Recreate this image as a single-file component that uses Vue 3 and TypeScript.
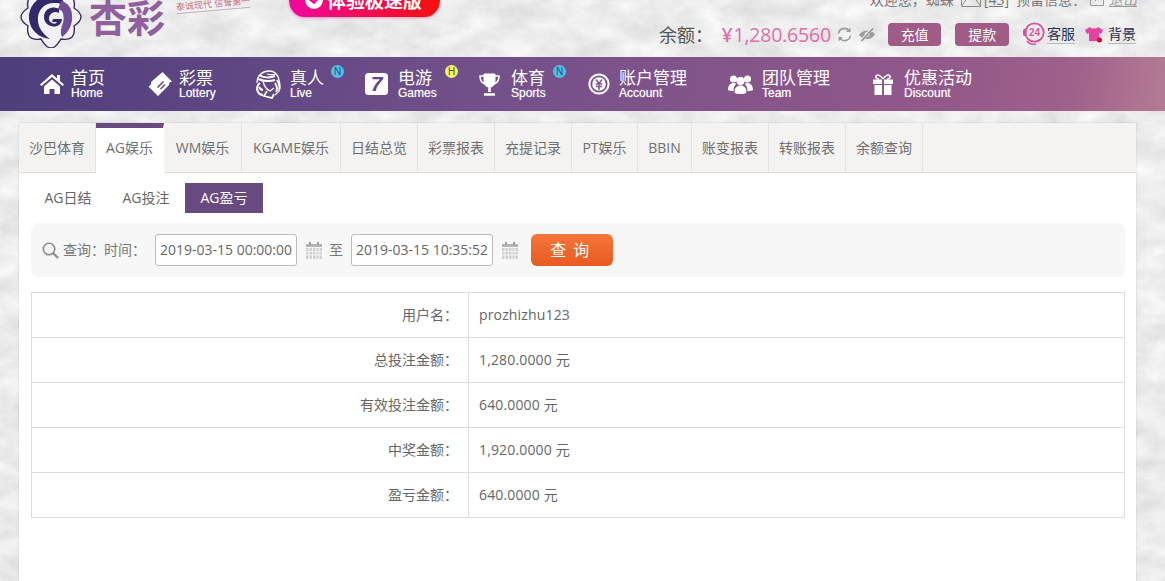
<script setup lang="ts">
import { ref } from "vue";

interface NavItem {
  key: string;
  cn: string;
  en: string;
  width: number;
  slot: number;
  badge?: string;
  badgeLeft?: number;
}

const navItems: NavItem[] = [
  { key: "home", cn: "首页", en: "Home", width: 108, slot: 31 },
  { key: "lottery", cn: "彩票", en: "Lottery", width: 107, slot: 31 },
  { key: "live", cn: "真人", en: "Live", width: 110, slot: 35, badge: "N", badgeLeft: 76 },
  { key: "games", cn: "电游", en: "Games", width: 114, slot: 33, badge: "H", badgeLeft: 80 },
  { key: "sports", cn: "体育", en: "Sports", width: 109, slot: 32, badge: "N", badgeLeft: 74 },
  { key: "account", cn: "账户管理", en: "Account", width: 140, slot: 31 },
  { key: "team", cn: "团队管理", en: "Team", width: 145, slot: 34 },
  { key: "gift", cn: "优惠活动", en: "Discount", width: 150, slot: 31 },
];

const tabs = [
  { label: "沙巴体育", width: 77 },
  { label: "AG娱乐", width: 68, active: true },
  { label: "WM娱乐", width: 78 },
  { label: "KGAME娱乐", width: 99 },
  { label: "日结总览", width: 77 },
  { label: "彩票报表", width: 77 },
  { label: "充提记录", width: 77 },
  { label: "PT娱乐", width: 66 },
  { label: "BBIN", width: 54 },
  { label: "账变报表", width: 77 },
  { label: "转账报表", width: 77 },
  { label: "余额查询", width: 77 },
];

const subTabs = ["AG日结", "AG投注", "AG盈亏"];
const activeSub = ref("AG盈亏");

const startTime = ref("2019-03-15 00:00:00");
const endTime = ref("2019-03-15 10:35:52");

const rows = [
  { label: "用户名：", value: "prozhizhu123" },
  { label: "总投注金额：", value: "1,280.0000 元" },
  { label: "有效投注金额：", value: "640.0000 元" },
  { label: "中奖金额：", value: "1,920.0000 元" },
  { label: "盈亏金额：", value: "640.0000 元" },
];
</script>

<template>
  <svg class="texture" width="1165" height="581" aria-hidden="true">
    <filter id="marble" color-interpolation-filters="sRGB" x="0" y="0" width="100%" height="100%">
      <feTurbulence type="fractalNoise" baseFrequency="0.03 0.05" numOctaves="5" seed="11" />
      <feColorMatrix values="0.16 0 0 0 0.845  0.16 0 0 0 0.845  0.16 0 0 0 0.845  0 0 0 0 1" />
    </filter>
    <rect width="1165" height="581" filter="url(#marble)" />
  </svg>

  <div class="page">
    <header class="top">
      <div class="brand">
        <svg class="emblem" width="62" height="62" viewBox="0 0 62 62">
          <path
            d="M31 2c5 0 8 4 10 7 4-1 9 0 11 2s3 7 2 11c3 2 7 5 7 9s-4 7-7 9c1 4 0 9-2 11s-7 3-11 2c-2 3-5 9-10 9s-8-6-10-9c-4 1-9 0-11-2s-3-7-2-11c-3-2-7-5-7-9s4-7 7-9c-1-4 0-9 2-11s7-3 11-2c2-3 5-7 10-7z"
            fill="#f3f1f4"
            stroke="#3a2f5c"
            stroke-width="1.4"
          />
          <path
            d="M39 10C23 5 8 17 9 33c1 11 10 19 21 20-7-5-13-12-12-22 1-9 8-15 18-14 4 0 7 2 9 4-1-5-3-9-6-11z"
            fill="#33286a"
          />
          <path d="M39 23c-7-4-15 0-15 8 0 7 7 11 13 9 3-1 5-4 5-7h-9l-1 3h5c-1 2-3 2-5 1-3-1-4-5-2-8s6-4 9-2z" fill="#33286a" />
          <path d="M41 15c6 1 11 7 11 14 1 9-3 17-10 22-2-4-1-9 1-14 1-4 1-8-1-12l-4-2c1-3 2-5 3-8z" fill="#6f4f96" />
        </svg>
        <span class="brand-name">杏彩</span>
        <span class="brand-tag">泰诚现代 信誉第一</span>
      </div>

      <div class="promo">
        <svg width="20" height="20" viewBox="0 0 20 20">
          <circle cx="10" cy="10" r="9" fill="#fff" />
          <path d="M5.500 9l4.500 3.500L15 7" fill="none" stroke="#f0089a" stroke-width="2.600" />
        </svg>
        <span>体验极速版</span>
      </div>

      <div class="user">
        <div class="welcome">
          <span>欢迎您，</span>
          <span class="nick">蜘蛛</span>
          <svg class="mail" width="20" height="15" viewBox="0 0 20 15">
            <path d="M.5.5h19v14H.5zM.5 14 7 5l3 3 3-3 6.500 9M.5.5 10 8l9.500-7.500" fill="none" stroke="#8a8a8a" />
          </svg>
          <span class="mail-count">[43]</span>
          <span class="reserve">预留信息：</span>
          <svg class="exit-icon" width="14" height="14" viewBox="0 0 14 14">
            <path d="M.5.5h13v13H.5zM5 9l4-4" fill="none" stroke="#999" />
          </svg>
          <a class="exit">退出</a>
        </div>

        <div class="balance-row">
          <span class="balance-label">余额：</span>
          <span class="balance"><i>¥</i>1,280.6560</span>
          <svg class="bal-icon" width="17" height="17" viewBox="0 0 17 17">
            <path d="M2.500 7.500a6 6 0 0 1 10.500-3M14.500 9.500a6 6 0 0 1-10.500 3" fill="none" stroke="#9a9a9a" stroke-width="1.600" />
            <path d="M14.500 1.500v4.500H10zM2.500 15.500V11H7z" fill="#9a9a9a" />
          </svg>
          <svg class="bal-icon" width="18" height="15" viewBox="0 0 18 15">
            <path d="M1 8c3-5 11-6 16-1-3 6-11 7-16 1z" fill="#9c9c9c" />
            <circle cx="9" cy="7.500" r="2.400" fill="#e8e8e8" />
            <path d="M3 14 15 1" stroke="#e8e8e8" stroke-width="3" />
            <path d="M3.500 14 15 1.500" stroke="#909090" stroke-width="1.500" />
          </svg>
          <button class="money-btn first">充值</button>
          <button class="money-btn">提款</button>
          <svg class="service-icon" width="23" height="24" viewBox="0 0 23 24">
            <circle cx="12.500" cy="10.500" r="9.200" fill="none" stroke="#d9539c" stroke-width="1.800" />
            <rect x="1" y="7" width="3.500" height="7" rx="1.500" fill="#d9539c" />
            <path d="M5 19c2 3 6 3.500 9 3" fill="none" stroke="#d9539c" stroke-width="1.600" />
            <text x="12.500" y="14" text-anchor="middle" class="service-num">24</text>
          </svg>
          <a class="link">客服</a>
          <svg class="shirt" width="20" height="17" viewBox="0 0 20 17">
            <path d="M6 1 1 4l2 4 2-1v8h10V7l2 1 2-4-5-3c-1 2-7 2-8 0z" fill="#e5439f" />
            <circle cx="15.500" cy="14" r="2.500" fill="#d8061f" />
          </svg>
          <a class="link">背景</a>
        </div>
      </div>
    </header>

    <nav class="nav">
      <div
        v-for="item in navItems"
        :key="item.key"
        class="nav-item"
        :style="{ width: item.width + 'px' }"
      >
        <span class="nav-icon" :style="{ width: item.slot + 'px' }">
          <svg v-if="item.key === 'home'" width="24" height="22" viewBox="0 0 24 22" fill="#fff">
            <path d="M12 1 0 11.500l1.500 1.500L12 4l10.500 9 1.500-1.500-4-3.500V2h-3v3.500z" />
            <path d="M4 13.500 12 6.500l8 7V21h-5.500v-5h-5v5H4z" />
          </svg>
          <svg v-else-if="item.key === 'lottery'" width="24" height="24" viewBox="0 0 24 24">
            <path d="M14.500 0 24 9.500a3.500 3.500 0 0 0-3 3.500L10 24 .5 14.500A3.500 3.500 0 0 0 3 10z" fill="#fff" />
            <path d="M9.500 15.500l6-6M12.500 17l4.500-4.500" stroke="#6a4c85" stroke-width="1.600" />
          </svg>
          <svg v-else-if="item.key === 'live'" width="26" height="29" viewBox="0 0 26 29" fill="none" stroke="#fff" stroke-width="1.300">
            <path d="M2 13C2 5 8 1 14 1c6 0 9 4 10 9 1 4 2 7 0 11-1 2-3 3-4 4" />
            <path d="M4 5c4 3 11 3 16 1M3 9c5 2 11 3 17 1M5 13c-3 2-4 6-2 9 1 2 3 3 5 3M4 17c1 2 2 3 4 3" stroke-width="2" />
            <path d="M8 11c1 5 3 8 7 10l4-3M12 4c3 1 6 1 9 0" />
            <path d="M12 21l-3 5 8 2 2-4M20 13c2 3 3 6 1 9M22 10c2 3 3 7 2 10" stroke-width="1.800" />
          </svg>
          <svg v-else-if="item.key === 'games'" width="23" height="22" viewBox="0 0 23 22">
            <rect width="23" height="22" rx="3.500" fill="#fff" />
            <text x="11.500" y="18" text-anchor="middle" class="seven">7</text>
          </svg>
          <svg v-else-if="item.key === 'sports'" width="21" height="23" viewBox="0 0 21 23" fill="none" stroke="#fff">
            <path d="M5 1h11v7c0 4-2 6-5.500 6S5 12 5 8z" fill="#fff" />
            <path d="M5 3H1c0 5 2 7 5 8M16 3h4c0 5-2 7-5 8" stroke-width="1.600" />
            <path d="M10.500 14v5M5 21.500h11" stroke-width="2.600" />
          </svg>
          <svg v-else-if="item.key === 'account'" width="22" height="22" viewBox="0 0 22 22">
            <circle cx="11" cy="11" r="9.600" fill="none" stroke="#fff" stroke-width="2" />
            <circle cx="11" cy="11" r="6.800" fill="#fff" />
            <path d="M8 6.500l3 4 3-4M7.800 11h6.400M7.800 13.500h6.400M11 10.500V17" fill="none" stroke="#7f5488" stroke-width="1.400" />
          </svg>
          <svg v-else-if="item.key === 'team'" width="25" height="21" viewBox="0 0 25 21" fill="#fff">
            <circle cx="5.500" cy="5" r="3.500" />
            <circle cx="19.500" cy="5" r="3.500" />
            <path d="M0 16c0-4 2-7 5.500-7 1 0 2 .3 2.800.8C6.500 11.500 5.500 14 5.500 17 3 17 1 16.800 0 16zM25 16c0-4-2-7-5.500-7-1 0-2 .3-2.800.8 1.800 1.700 2.800 4.200 2.800 7.200 2.500 0 4.500-.2 5.500-1z" />
            <circle cx="12.500" cy="7" r="4.200" />
            <path d="M6.500 18.500c0-4.500 2.500-7 6-7s6 2.500 6 7c-2 2-10 2-12 0z" />
          </svg>
          <svg v-else width="20" height="21" viewBox="0 0 20 21" fill="#fff">
            <path d="M0 5.500h9V10H0zM11 5.500h9V10h-9zM1.500 11H9v10H1.500zM11 11h7.500v10H11z" />
            <path d="M10 5C8 1.500 5 .5 3.500 1.500S3 5 6 5.200M10 5c2-3.500 5-4.500 6.500-3.500S17 5 14 5.200" fill="none" stroke="#fff" stroke-width="1.500" />
          </svg>
        </span>
        <span class="nav-text">
          <b>{{ item.cn }}</b>
          <small>{{ item.en }}</small>
        </span>
        <span
          v-if="item.badge"
          class="nav-badge"
          :class="{ hot: item.badge === 'H' }"
          :style="{ left: item.badgeLeft + 'px' }"
        >{{ item.badge }}</span>
      </div>
    </nav>

    <main class="card">
      <div class="tabs">
        <a
          v-for="tab in tabs"
          :key="tab.label"
          class="tab"
          :class="{ active: tab.active }"
          :style="{ width: tab.width + 'px' }"
        >{{ tab.label }}</a>
      </div>

      <div class="body">
        <div class="sub-tabs">
          <a
            v-for="s in subTabs"
            :key="s"
            class="sub-tab"
            :class="{ active: s === activeSub }"
            @click="activeSub = s"
          >{{ s }}</a>
        </div>

        <div class="search">
          <svg class="search-icon" width="17" height="17" viewBox="0 0 17 17" fill="none" stroke="#8a8a8a">
            <circle cx="7" cy="7" r="5.700" stroke-width="1.600" />
            <path d="M11 11l5 5" stroke-width="2.200" />
          </svg>
          <span class="s-label">查询：</span>
          <span class="s-label time">时间：</span>
          <input v-model="startTime" class="date" type="text" readonly />
          <svg class="cal" width="16" height="18" viewBox="0 0 16 18">
            <path d="M0 3h16v3H0z" fill="#b4b4b4" />
            <path d="M3 1h2v3H3zM11 1h2v3h-2z" fill="#9c9c9c" />
            <path d="M0 7h16v11H0z" fill="#cfcfcf" />
            <path d="M3 7v11M6.500 7v11M10 7v11M13 7v11M0 10.500h16M0 14h16" stroke="#f7f7f7" />
          </svg>
          <span class="s-label to">至</span>
          <input v-model="endTime" class="date" type="text" readonly />
          <svg class="cal" width="16" height="18" viewBox="0 0 16 18">
            <path d="M0 3h16v3H0z" fill="#b4b4b4" />
            <path d="M3 1h2v3H3zM11 1h2v3h-2z" fill="#9c9c9c" />
            <path d="M0 7h16v11H0z" fill="#cfcfcf" />
            <path d="M3 7v11M6.500 7v11M10 7v11M13 7v11M0 10.500h16M0 14h16" stroke="#f7f7f7" />
          </svg>
          <button class="query">查 询</button>
        </div>

        <table class="report">
          <tbody>
            <tr v-for="row in rows" :key="row.label">
              <th>{{ row.label }}</th>
              <td>{{ row.value }}</td>
            </tr>
          </tbody>
        </table>
      </div>
    </main>
  </div>
</template>

<style>
html,
body {
  margin: 0;
  height: 581px;
  overflow: hidden;
  background: #ebebeb;
}
</style>

<style scoped>
.texture {
  position: absolute;
  left: 0;
  top: 0;
  z-index: 0;
}

.page {
  position: relative;
  z-index: 1;
  width: 1165px;
  height: 581px;
  overflow: hidden;
  font-family: "Open Sans", "Noto Sans CJK SC", sans-serif;
  font-size: 14px;
  color: #666;
}

/* page is scrolled a bit in the shot, top of header is cut */
.top {
  display: flex;
  align-items: flex-start;
  height: 57px;
  overflow: hidden;
  padding-left: 20px;
  box-sizing: border-box;
}

.brand {
  display: flex;
  align-items: flex-start;
  width: 269px;
  flex: none;
  margin-top: -14px;
}

.emblem {
  flex: none;
}

.brand-name {
  margin-left: 7px;
  margin-top: 7px;
  font-size: 38px;
  line-height: 48px;
  font-weight: 700;
  color: #8f5f9e;
}

.brand-tag {
  margin-left: 11px;
  margin-top: 12px;
  font-size: 9px;
  line-height: 12px;
  white-space: nowrap;
  color: #c4707f;
  border-bottom: 1px solid #c0b2b6;
  transform: rotate(-5deg);
  height: 12px;
}

.promo {
  display: flex;
  align-items: center;
  gap: 3px;
  flex: none;
  width: 151px;
  height: 34px;
  margin-top: -17px;
  padding: 0 0 0 15px;
  border-radius: 0 0 15px 15px / 0 0 17px 17px;
  background: linear-gradient(90deg, #f0089f, #f6100c);
  box-shadow: 0 1px 3px rgba(240, 40, 120, 0.45);
  color: #fff;
  font-size: 19px;
  font-weight: 700;
  box-sizing: border-box;
  white-space: nowrap;
}

.user {
  margin-left: auto;
  width: 506px;
  padding-right: 29px;
  box-sizing: border-box;
  flex: none;
}

.welcome {
  display: flex;
  align-items: center;
  justify-content: flex-end;
  height: 20px;
  margin: -11px -1px 0 0;
  font-size: 14px;
  color: #777;
  white-space: nowrap;
}

.mail {
  margin-left: 7px;
  flex: none;
}

.mail-count {
  margin-left: 3px;
  text-decoration: underline;
}

.reserve {
  margin-left: 7px;
}

.exit-icon {
  margin-left: 4px;
  flex: none;
}

.exit {
  margin-left: 5px;
  font-style: italic;
  text-decoration: underline;
  color: #999;
}

.balance-row {
  display: flex;
  align-items: center;
  justify-content: flex-end;
  height: 24px;
  margin-top: 13px;
  white-space: nowrap;
}

.balance-label {
  font-size: 18px;
  color: #555;
  width: 63px;
}

.balance {
  font-size: 19.500px;
  color: #dd6fa9;
  letter-spacing: -0.2px;
}

.balance i {
  font-style: normal;
  font-weight: 600;
  margin-right: 1px;
}

.bal-icon {
  margin-left: 5px;
  flex: none;
}

.money-btn {
  width: 54px;
  height: 23px;
  margin-left: 14px;
  padding: 0;
  border: 0;
  border-radius: 4px;
  background: #a05c86;
  color: #fff;
  font: inherit;
  font-size: 14px;
  line-height: 23px;
}

.money-btn.first {
  margin-left: 12px;
}

.service-icon {
  margin-left: 13px;
  flex: none;
}

.service-num {
  font: 700 10px "Liberation Sans", sans-serif;
  fill: #d9539c;
}

.link {
  font-size: 14px;
  color: #2a3350;
  line-height: 18px;
  border-bottom: 1px solid #b9b9c4;
}

.service-icon + .link {
  margin-left: 2px;
}

.shirt {
  margin-left: 9px;
  margin-right: 4px;
  flex: none;
}

.nav {
  display: flex;
  height: 54px;
  padding-left: 40px;
  background: linear-gradient(100deg, #4d3e7c 0%, #73508a 42%, #94598a 82%, #a0618b 92%, #b47c92 100%);
  box-sizing: border-box;
  align-items: center;
}

.nav-item {
  position: relative;
  display: flex;
  align-items: center;
  flex: none;
  color: #fff;
}

.nav-icon {
  display: flex;
  align-items: center;
  flex: none;
}

.nav-text {
  display: flex;
  flex-direction: column;
}

.nav-text b {
  font-size: 17px;
  line-height: 17px;
  font-weight: 400;
  white-space: nowrap;
}

.nav-text small {
  margin-top: 1px;
  font-family: "Liberation Sans", Arial, sans-serif;
  font-size: 12px;
  line-height: 13px;
  text-shadow: 0 0 1px rgba(255, 255, 255, 0.6);
}

.seven {
  font: italic 700 21px "Liberation Sans", sans-serif;
  fill: #5d4880;
}

.nav-badge {
  position: absolute;
  top: -4px;
  width: 13px;
  height: 13px;
  border-radius: 50%;
  background: #4fc0ea;
  color: #2b4a73;
  font: 10px/13px "Liberation Sans", sans-serif;
  text-align: center;
}

.nav-badge.hot {
  background: #f6f06a;
  color: #5b5210;
}

.card {
  width: 1117px;
  height: 458px;
  margin: 12px 0 0 19px;
  background: #fff;
  box-shadow: 0 0 2px rgba(0, 0, 0, 0.15);
}

.tabs {
  display: flex;
  height: 50px;
  background: #f5f3f1;
  border-bottom: 1px solid #ddd;
  box-sizing: border-box;
}

.tab {
  display: block;
  box-sizing: border-box;
  height: 49px;
  border-right: 1px solid #e4e2e0;
  text-align: center;
  line-height: 49px;
  color: #6f6f6f;
  white-space: nowrap;
  flex: none;
}

.tab.active {
  height: 50px;
  background: #fff;
  border-top: 5px solid #684a80;
  line-height: 39px;
  border-right-color: transparent;
}

.body {
  padding: 10px 11px 0 12px;
}

.sub-tabs {
  display: flex;
  margin-left: -2px;
}

.sub-tab {
  width: 78px;
  height: 30px;
  line-height: 30px;
  text-align: center;
  color: #666;
}

.sub-tab.active {
  background: #684a80;
  color: #fff;
}

.search {
  display: flex;
  align-items: center;
  height: 54px;
  margin-top: 10px;
  padding-left: 11px;
  border-radius: 8px;
  background: #f7f7f7;
  box-sizing: border-box;
  white-space: nowrap;
}

.search-icon {
  flex: none;
}

.s-label {
  margin-left: 4px;
  padding-bottom: 3px;
  font-size: 14px;
  color: #777;
  width: 37px;
}

.time {
  width: 51px;
}

.to {
  margin-left: 7px;
  width: 22px;
}

.date {
  width: 142px;
  height: 32px;
  padding: 0 0 2px;
  border: 1px solid #bbb;
  border-radius: 3px;
  background: #fff;
  color: #666;
  font: inherit;
  text-align: center;
  box-sizing: border-box;
  outline: none;
}

.cal {
  margin-left: 9px;
  flex: none;
}

.query {
  width: 82px;
  height: 32px;
  margin-left: 13px;
  padding: 0 3px 2px 0;
  border: 0;
  border-radius: 6px;
  background: linear-gradient(#f4763a, #e85a20);
  color: #fff;
  font: inherit;
  font-size: 16px;
  letter-spacing: 1.500px;
  flex: none;
}

.report {
  width: 1094px;
  margin-top: 15px;
  border-collapse: collapse;
  table-layout: fixed;
}

.report th,
.report td {
  height: 45px;
  padding: 0 0 2px;
  border: 1px solid #ddd;
  box-sizing: border-box;
  font-weight: 400;
}

.report th {
  width: 437px;
  padding-right: 10px;
  text-align: right;
  color: #666;
}

.report td {
  padding-left: 10px;
  text-align: left;
  letter-spacing: 0.15px;
}
</style>
